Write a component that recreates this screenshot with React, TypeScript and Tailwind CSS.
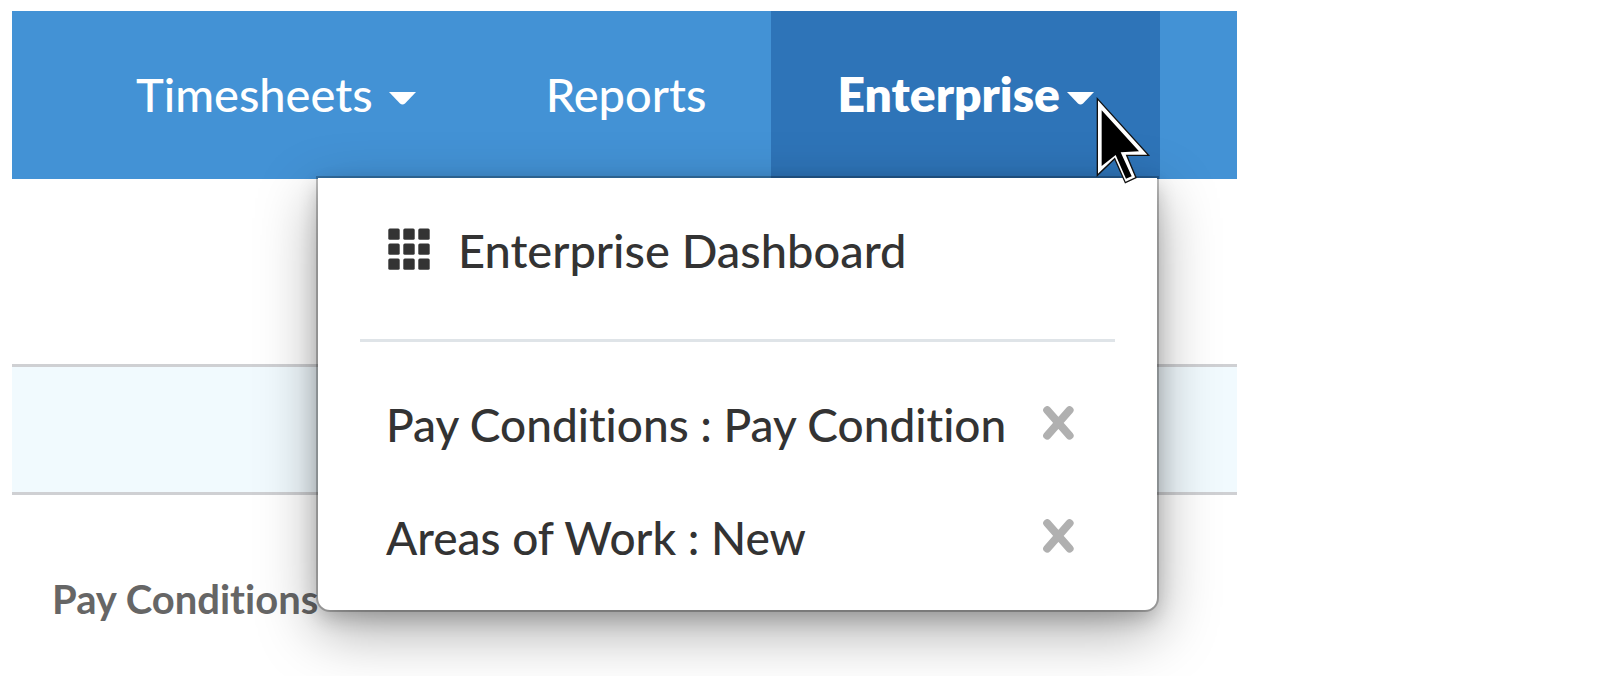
import * as React from "react";

const initialItems = ["Pay Conditions : Pay Condition", "Areas of Work : New"];

function Caret() {
  return (
    <svg viewBox="0 0 27 13" className="mt-2 h-[13px] w-[27px] shrink-0 fill-white" aria-hidden="true">
      <path d="M0 0H27L16 11.4Q13.500 13.600 11 11.4Z" />
    </svg>
  );
}

function GridIcon() {
  return (
    <svg viewBox="0 0 42 42" className="mb-1 h-[42px] w-[42px] shrink-0 fill-[#333333]" aria-hidden="true">
      {[0, 15, 30].map((y) =>
        [0.3, 15.3, 30.3].map((x) => (
          <rect key={`${x}-${y}`} x={x} y={y + 0.4} width="11.4" height="11.4" rx="1.500" />
        ))
      )}
    </svg>
  );
}

function CloseIcon() {
  return (
    <svg viewBox="0 0 31 34" className="h-[34px] w-[31px]" aria-hidden="true">
      <path
        d="M4.200 4.200L26.600 29.600M26.600 4.200L4.200 29.600"
        fill="none"
        stroke="#b0b0b0"
        strokeWidth="8"
        strokeLinecap="round"
      />
    </svg>
  );
}

function Pointer() {
  return (
    <svg
      viewBox="825 136 171 270"
      className="pointer-events-none absolute top-[85px] right-[8px] z-20 h-[90px] w-[57px]"
      aria-hidden="true"
    >
      <path
        d="M832 144L986 314L920 314L948 381L916 396L884 324L832 374Z"
        fill="#ffffff"
        stroke="#111111"
        strokeWidth="4"
      />
      <path d="M845 179L957 302L902 305L935 377L918 384L887 313L845 346Z" fill="#000000" />
    </svg>
  );
}

export default function App() {
  const [open, setOpen] = React.useState(true);
  const [items, setItems] = React.useState(initialItems);

  return (
    <div className="min-h-screen bg-white pt-[11px] pl-3 font-['Lato',sans-serif] [font-variant-ligatures:none]">
      <div className="w-full max-w-[1225px]">
        <nav className="flex h-[168px] bg-[#4392d5] pl-[59px] text-[47px] font-medium text-white">
          <button type="button" className="flex items-center gap-4 px-[65px] pb-0.5">
            Timesheets
            <Caret />
          </button>
          <a href="#reports" className="flex items-center px-[65px] pb-0.5">
            Reports
          </a>
          <div className="relative flex bg-[#2e74b8]">
            <button
              type="button"
              aria-expanded={open}
              onClick={() => setOpen(!open)}
              className="flex items-center gap-[7px] px-[66px] pb-0.5 text-5xl font-extrabold"
            >
              Enterprise
              <Caret />
            </button>

            {open && (
              <div className="absolute top-[167px] right-[3px] z-10 w-[839px] rounded-b-xl bg-white px-[42px] py-4 text-[#333333] shadow-[0_0_0_2px_rgba(0,0,0,0.24),0_8px_20px_rgba(0,0,0,0.2),0_20px_60px_rgba(0,0,0,0.35)]">
                <a href="#dashboard" className="flex h-[113px] items-center gap-7 px-7">
                  <GridIcon />
                  Enterprise Dashboard
                </a>
                <hr className="mt-8 mb-[26px] border-t-[3px] border-[#dfe4e8]" />
                <ul className="text-[46px]">
                  {items.map((item) => (
                    <li key={item} className="flex h-[113px] items-center justify-between pr-[41px] pl-[26px]">
                      <a href="#item" className="whitespace-nowrap">
                        {item}
                      </a>
                      <button
                        type="button"
                        aria-label={`Close ${item}`}
                        onClick={() => setItems(items.filter((i) => i !== item))}
                        className="mb-1"
                      >
                        <CloseIcon />
                      </button>
                    </li>
                  ))}
                </ul>
              </div>
            )}
            <Pointer />
          </div>
        </nav>

        <main>
          <div className="mt-[185px] h-[131px] border-y-[3px] border-[#cfd0d3] bg-[#f1fafe]" />
          <h1 className="mt-20 pl-10 text-[40px] leading-[48px] font-bold text-[#666666]">
            Pay Conditions
          </h1>
        </main>
      </div>
    </div>
  );
}
